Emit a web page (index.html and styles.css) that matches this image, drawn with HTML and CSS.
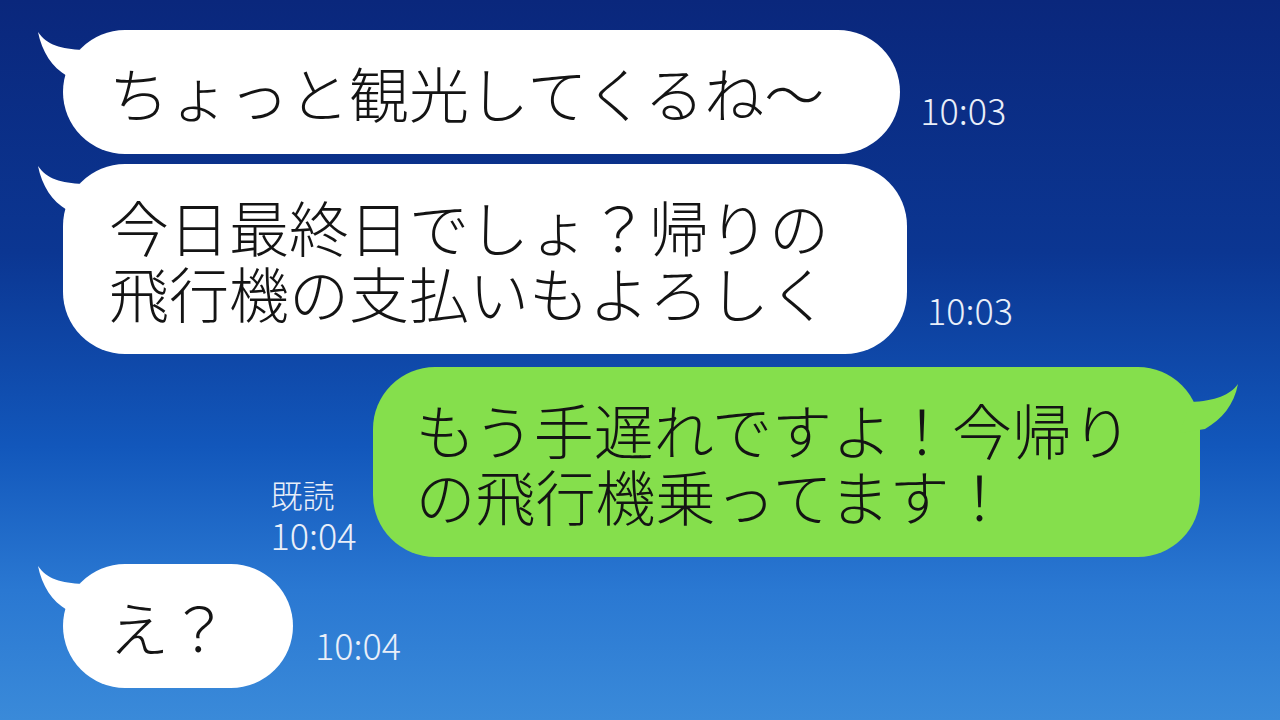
FILE: index.html
```html
<!DOCTYPE html>
<html lang="ja">

<head>
    <meta charset="UTF-8">
    <meta name="viewport" content="width=device-width, initial-scale=1.0">
    <title>トーク</title>
    <link rel="stylesheet" href="styles.css">
</head>

<body>
    <div class="chat">
        <div class="row first">
            <div class="bubble">
                <svg class="tail" width="70" height="60" viewBox="0 0 70 60"><path d="M1 2 C10 15 24 19 46 20 L46 58 L30 46 C15 37 5 22 1 2 Z" /></svg>
                <div class="line">ちょっと観光してくるね〜</div>
            </div>
            <div class="meta">10:03</div>
        </div>

        <div class="row second">
            <div class="bubble">
                <svg class="tail" width="70" height="60" viewBox="0 0 70 60"><path d="M1 2 C10 15 24 19 46 20 L46 58 L30 46 C15 37 5 22 1 2 Z" /></svg>
                <div class="line">今日最終日でしょ？帰りの</div>
                <div class="line">飛行機の支払いもよろしく</div>
            </div>
            <div class="meta">10:03</div>
        </div>

        <div class="row mine">
            <div class="meta read">
                <span>既読</span>
                <span>10:04</span>
            </div>
            <div class="bubble green">
                <svg class="tail right" width="70" height="70" viewBox="0 0 70 70"><path d="M68 17 C60 28 46 34 20 35 L10 66 L35 62 C52 52 64 38 68 17 Z" /></svg>
                <div class="line">もう手遅れですよ！今帰り</div>
                <div class="line">の飛行機乗ってます！</div>
            </div>
        </div>

        <div class="row last">
            <div class="bubble short">
                <svg class="tail" width="70" height="60" viewBox="0 0 70 60"><path d="M1 2 C10 15 24 19 46 20 L46 58 L30 46 C15 37 5 22 1 2 Z" /></svg>
                <div class="line">え？</div>
            </div>
            <div class="meta">10:04</div>
        </div>
    </div>
</body>

</html>
```

FILE: styles.css
```css
body {
    margin: 0;
    width: 1280px;
    height: 720px;
    overflow: hidden;
    font-family: "Noto Sans CJK JP", "Noto Sans", sans-serif;
    background: linear-gradient(180deg, #0a277c 0%, #0b3692 35%, #1257bb 62%, #2a78d2 82%, #3a8ad9 100%);
}

.chat {
    display: flex;
    flex-direction: column;
    padding-top: 30px;
}

.row {
    display: flex;
    align-items: flex-end;
    padding-left: 63px;
}

.second {
    margin-top: 10px;
}

.mine {
    justify-content: flex-end;
    padding-right: 80px;
    margin-top: 13px;
}

.last {
    margin-top: 7px;
}

.bubble {
    position: relative;
    background-color: #fff;
    color: #141414;
    font-size: 60px;
    font-weight: 300;
    padding: 29px 76px 29px 46px;
    border-radius: 62px;
    white-space: nowrap;
}

.line {
    height: 66px;
    line-height: 66px;
}

.second .bubble {
    padding-right: 78px;
}

.green {
    background-color: #85df4c;
    padding: 29px 68px 29px 43px;
}

.short {
    padding-right: 64px;
}

.tail {
    position: absolute;
    left: -26px;
    top: 0;
    fill: #fff;
}

.tail.right {
    left: auto;
    right: -40px;
    top: 0;
    fill: #85df4c;
}

.meta {
    color: #e9eff9;
    font-size: 36px;
    font-weight: 300;
    line-height: 40px;
    margin-left: 20px;
    margin-bottom: 25px;
}

.second .meta {
    margin-left: 20px;
    margin-bottom: 25px;
}

.last .meta {
    margin-left: 22px;
    margin-bottom: 24px;
}

.read {
    display: flex;
    flex-direction: column;
    margin: 0 16px 3px 0;
}

.read span:first-child {
    font-size: 32px;
}
```
